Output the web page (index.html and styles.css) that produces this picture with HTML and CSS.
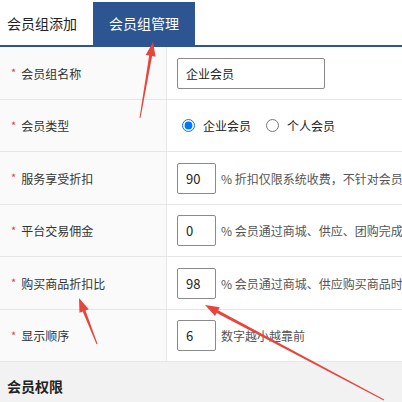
FILE: index.html
```html
<!DOCTYPE html>
<html lang="zh-CN">
<head>
<meta charset="utf-8">
<title>会员组管理</title>
<link rel="stylesheet" href="styles.css">
</head>
<body>
<div class="page">
  <div class="tabs">
    <div class="tab">会员组添加</div>
    <div class="tab active">会员组管理</div>
  </div>
  <div class="form">
    <div class="row">
      <div class="label"><span class="req">*</span>会员组名称</div>
      <div class="field"><input class="text wide" type="text" value="企业会员"></div>
    </div>
    <div class="row">
      <div class="label"><span class="req">*</span>会员类型</div>
      <div class="field">
        <label class="radio"><input type="radio" name="t" checked>企业会员</label>
        <label class="radio second"><input type="radio" name="t">个人会员</label>
      </div>
    </div>
    <div class="row">
      <div class="label"><span class="req">*</span>服务享受折扣</div>
      <div class="field"><input class="text num" type="text" value="90"><span class="help">% 折扣仅限系统收费，不针对会员商品交易</span></div>
    </div>
    <div class="row">
      <div class="label"><span class="req">*</span>平台交易佣金</div>
      <div class="field"><input class="text num" type="text" value="0"><span class="help">% 会员通过商城、供应、团购完成交易时收取</span></div>
    </div>
    <div class="row">
      <div class="label"><span class="req">*</span>购买商品折扣比</div>
      <div class="field"><input class="text num" type="text" value="98"><span class="help">% 会员通过商城、供应购买商品时享受的折扣</span></div>
    </div>
    <div class="row">
      <div class="label"><span class="req">*</span>显示顺序</div>
      <div class="field"><input class="text num" type="text" value="6"><span class="help">数字越小越靠前</span></div>
    </div>
  </div>
  <div class="section">会员权限</div>
  <svg class="marks" width="402" height="402" viewBox="0 0 402 402">
    <polygon points="153,42 155.57,56.64 152.12,56.05 140.49,118.08 139.51,117.92 149.16,55.55 145.71,54.96"/>
    <polygon points="79,298 88.76,309.22 85.50,310.49 97.47,343.82 96.53,344.18 82.70,311.59 79.44,312.86"/>
    <polygon points="205,305 219.71,307.14 218.07,310.23 384.23,399.56 383.77,400.44 216.67,312.89 215.03,315.98"/>
  </svg>
</div>
</body>
</html>
```

FILE: styles.css
```css
html, body {
  margin: 0;
  padding: 0;
  background: #ffffff;
}
body {
  font-family: "Noto Sans CJK SC", "Microsoft YaHei", sans-serif;
  color: #333333;
  font-size: 12px;
}
.page {
  position: relative;
  width: 402px;
  height: 402px;
  overflow: hidden;
}
.tabs {
  display: flex;
  align-items: flex-end;
  height: 45px;
  border-bottom: 2px solid #2c5592;
}
.tab {
  width: 93px;
  height: 43px;
  line-height: 43px;
  font-size: 14px;
  padding-left: 7px;
  box-sizing: border-box;
  color: #222222;
}
.tab.active {
  width: 102px;
  padding-left: 0;
  text-align: center;
  background: #2c5592;
  color: #ffffff;
}
.form {
  display: flex;
  flex-direction: column;
}
.row {
  display: grid;
  grid-template-columns: 167px 1fr;
  height: 53px;
  box-sizing: border-box;
  border-bottom: 1px solid #e6e6e6;
}
.row:nth-child(even) {
  height: 52px;
}
.label {
  display: flex;
  align-items: center;
  background: #fafafa;
  border-right: 1px solid #e6e6e6;
  padding-left: 11px;
  font-size: 12px;
  color: #333333;
}
.req {
  color: #e2403b;
  font-size: 11px;
  margin-right: 5px;
  position: relative;
  top: -1px;
}
.field {
  display: flex;
  align-items: center;
  padding-left: 10px;
  white-space: nowrap;
}
.text {
  box-sizing: border-box;
  height: 31px;
  border: 1px solid #8a8a8a;
  border-radius: 2px;
  padding: 0 8px;
  font-family: "Noto Sans CJK SC", sans-serif;
  font-size: 12px;
  color: #222222;
  background: #ffffff;
  outline: none;
}
.text.wide {
  width: 148px;
}
.text.num {
  width: 39px;
  font-size: 13px;
}
.help {
  margin-left: 5px;
  color: #555555;
  font-size: 12px;
}
.radio {
  display: flex;
  align-items: center;
  font-size: 12px;
  color: #222222;
}
.radio input {
  width: 13px;
  height: 13px;
  margin: 0 8px 0 5px;
}
.radio.second {
  margin-left: 10px;
}
.radio.second input {
  margin-left: 5px;
}
.section {
  height: 40px;
  background: #f2f2f2;
  padding: 0 7px;
  line-height: 48px;
  font-size: 14px;
  font-weight: bold;
  color: #222222;
}
.marks {
  position: absolute;
  left: 0;
  top: 0;
  pointer-events: none;
}
.marks polygon {
  fill: #e8453c;
}
```
